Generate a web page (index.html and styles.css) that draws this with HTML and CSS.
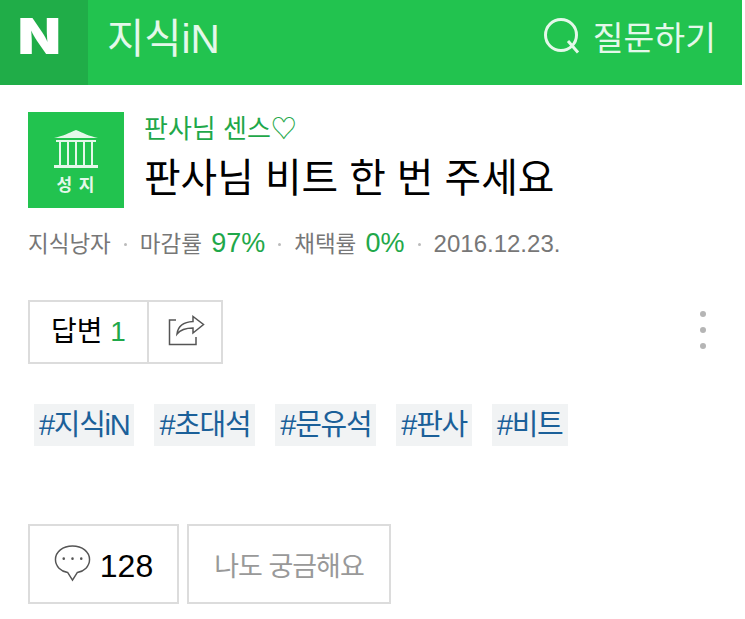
FILE: index.html
```html
<!DOCTYPE html>
<html lang="ko">
<head>
  <meta charset="UTF-8" />
  <meta name="viewport" content="width=device-width, initial-scale=1.0"/>
  <title>지식iN</title>
  <link rel="stylesheet" href="styles.css">
</head>
<body>
  <header class="topbar">
    <div class="logo"><span class="logo-mark">N</span></div>
    <span class="service">지식iN</span>
    <a class="ask">
      <svg class="ask-icon" width="36" height="36" viewBox="0 0 36 36" fill="none" stroke="#e4f8ea" stroke-width="3">
        <circle cx="17" cy="17" r="15.5"/>
        <path d="M24 23 L34 34.5"/>
      </svg>
      <span>질문하기</span>
    </a>
  </header>

  <main class="content">
    <section class="question">
      <div class="badge">
        <svg width="44" height="38" viewBox="0 0 44 38" fill="none" stroke="#e4f8ea">
          <path d="M0 8 C9 6 15 3 22 0 C29 3 35 6 44 8 Z" fill="#e4f8ea" stroke="none"/>
          <path d="M2 11 H42" stroke-width="2"/>
          <path d="M6 11 V35 M14 11 V35 M22 11 V35 M30 11 V35 M38 11 V35" stroke-width="2"/>
          <path d="M0 36.5 H44" stroke-width="3"/>
        </svg>
        <span class="badge-label">성 지</span>
      </div>
      <div class="question-text">
        <p class="subtitle">판사님 센스♡</p>
        <h1 class="title">판사님 비트 한 번 주세요</h1>
      </div>
    </section>

    <div class="meta">
      <span>지식낭자</span>
      <i class="sep"></i>
      <span>마감률 <b>97%</b></span>
      <i class="sep"></i>
      <span>채택률 <b>0%</b></span>
      <i class="sep"></i>
      <span class="date">2016.12.23.</span>
    </div>

    <div class="toolbar">
      <div class="answer-group">
        <div class="answer-count">답변 <b>1</b></div>
        <div class="share">
          <svg width="38" height="34" viewBox="0 0 38 34" fill="none" stroke="#555" stroke-width="1.5">
            <path d="M8 5 H1.5 V29.5 H28 V22"/>
            <path d="M9 19 C10 10 16 7 25 6.5 V1.5 L35.5 9.5 L25 18 V13 C18 13 13 14 9 19 Z"/>
          </svg>
        </div>
      </div>
      <div class="more"><i></i><i></i><i></i></div>
    </div>

    <div class="tags">
      <a class="tag">#지식iN</a>
      <a class="tag">#초대석</a>
      <a class="tag">#문유석</a>
      <a class="tag">#판사</a>
      <a class="tag">#비트</a>
    </div>

    <div class="actions">
      <div class="btn btn-comment">
        <svg width="37" height="37" viewBox="0 0 38 38" fill="none" stroke="#555" stroke-width="1.5">
          <path d="M19 1 C9 1 1.5 7 1.5 15 C1.5 22 7 27 14 28.2 L19 36 L24 28.2 C31 27 36.5 22 36.5 15 C36.5 7 29 1 19 1 Z"/>
          <circle cx="10" cy="14" r="1.3" fill="#555" stroke="none"/>
          <circle cx="19" cy="14" r="1.3" fill="#555" stroke="none"/>
          <circle cx="28" cy="14" r="1.3" fill="#555" stroke="none"/>
        </svg>
        <span class="comment-count">128</span>
      </div>
      <div class="btn btn-curious">나도 궁금해요</div>
    </div>
  </main>
</body>
</html>
```

FILE: styles.css
```css
:root {
  --green: #22c34f;
  --green-dark: #20ad48;
  --green-text: #1fa84a;
  --line: #dcdcdc;
  --gray: #777;
}

body {
  margin: 0;
  width: 742px;
  font-family: 'Liberation Sans', 'Noto Sans CJK KR', sans-serif;
  background: #fff;
  color: #000;
}

.topbar {
  display: flex;
  align-items: center;
  height: 85px;
  background: var(--green);
  color: #e4f8ea;
}

.logo {
  width: 79px;
  height: 85px;
  padding-right: 9px;
  line-height: 72px;
  background: var(--green-dark);
  color: #fff;
  text-align: center;
  font-family: 'Inter', sans-serif;
  font-size: 50px;
  font-weight: 900;
}

.logo-mark {
  display: inline-block;
  transform: scaleX(1.12);
}

.service {
  margin-left: 19px;
  margin-bottom: 14px;
  font-size: 40.5px;
}

.ask {
  display: flex;
  align-items: center;
  gap: 13px;
  margin-left: auto;
  margin-right: 26px;
  margin-bottom: 15px;
  font-size: 33.5px;
}

.ask-icon {
  margin-top: 2px;
}

.content {
  padding: 27px 0 0 28px;
}

.question {
  display: flex;
  gap: 20px;
}

.badge {
  display: flex;
  flex-direction: column;
  align-items: center;
  width: 96px;
  height: 96px;
  padding-top: 18px;
  box-sizing: border-box;
  background: var(--green);
  color: #e4f8ea;
}

.badge-label {
  margin-top: 6px;
  font-size: 17px;
  font-weight: 700;
  line-height: 24px;
  letter-spacing: 1px;
}

.subtitle {
  margin: -2px 0 0;
  font-size: 26px;
  line-height: 38px;
  color: var(--green-text);
}

.title {
  margin: 5px 0 0;
  font-size: 39.8px;
  font-weight: 400;
  line-height: 50px;
}

.meta {
  display: flex;
  align-items: baseline;
  margin-top: 18px;
  height: 36px;
  font-size: 22.5px;
  word-spacing: 3px;
  color: var(--gray);
}

.meta b {
  font-size: 27px;
  font-weight: 400;
  color: var(--green-text);
}

.date {
  font-size: 24px;
}

.sep {
  align-self: center;
  width: 3px;
  height: 3px;
  margin: 0 13px;
  border-radius: 50%;
  background: #bbb;
}

.toolbar {
  display: flex;
  align-items: flex-start;
  justify-content: space-between;
  margin-top: 38px;
  padding-right: 36px;
}

.answer-group {
  display: flex;
  height: 64px;
  box-sizing: border-box;
  border: 2px solid var(--line);
}

.answer-count {
  width: 117px;
  border-right: 2px solid var(--line);
  text-align: center;
  font-size: 28px;
  line-height: 60px;
}

.answer-count b {
  font-weight: 400;
  color: var(--green-text);
}

.share {
  display: flex;
  align-items: center;
  justify-content: center;
  width: 68px;
  padding-left: 4px;
}

.more {
  display: flex;
  flex-direction: column;
  gap: 10px;
  margin-top: 11px;
}

.more i {
  width: 6px;
  height: 6px;
  border-radius: 50%;
  background: #b5b5b5;
}

.tags {
  display: flex;
  gap: 20px;
  margin-top: 40px;
  margin-left: 6px;
}

.tag {
  height: 42px;
  padding: 0 5px;
  background: #f1f3f4;
  color: #1b6099;
  font-size: 29px;
  line-height: 42px;
  letter-spacing: -1.3px;
}

.actions {
  display: flex;
  gap: 8px;
  margin-top: 78px;
}

.btn {
  display: flex;
  align-items: center;
  justify-content: center;
  height: 80px;
  box-sizing: border-box;
  border: 2px solid var(--line);
}

.btn-comment {
  gap: 9px;
  width: 151px;
  font-size: 32px;
}

.btn-comment svg {
  margin-top: -2px;
}

.comment-count {
  margin-top: 5px;
}

.btn-curious {
  width: 204px;
  color: #999;
  font-size: 27px;
  letter-spacing: -1px;
}
```
